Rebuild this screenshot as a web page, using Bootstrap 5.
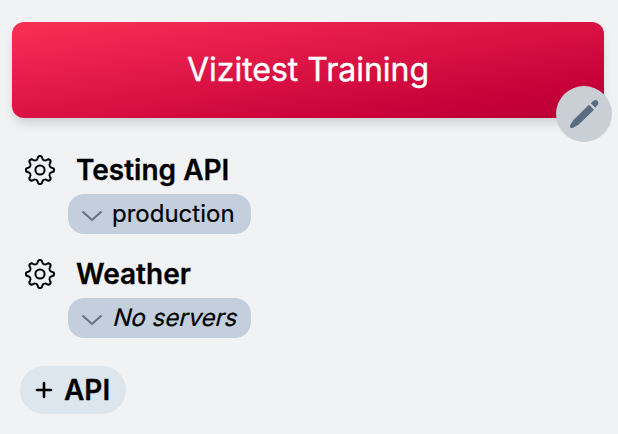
<!DOCTYPE html>
<html lang="en">
<head>
<meta charset="utf-8">
<title>Vizitest Training</title>
<link href="https://cdn.jsdelivr.net/npm/bootstrap@5.3.0/dist/css/bootstrap.min.css" rel="stylesheet">
<style>
body{background:#f0f2f4;font-family:Inter,"Liberation Sans",sans-serif;color:#000;height:434px;overflow:hidden}
.project{margin:22px 14px 0 12px;height:96px;border-radius:12px;background:linear-gradient(to bottom right,#fa3056,#c70039 80%,#b80035);box-shadow:0 8px 12px -2px rgba(0,0,0,.1),0 4px 8px -2px rgba(0,0,0,.06);color:#fff;font-size:32px}
.title{-webkit-text-stroke:.4px #fff}
.edit{right:-8px;bottom:-24px;width:56px;height:56px;background:#cacfd6;color:#586b80}
.apis{padding:32px 0 0 20px}
.api{height:104px}
.api-name{font-size:28px;font-weight:600;line-height:40px;-webkit-text-stroke:.3px #000}
.gear{width:40px;height:40px;margin-right:16px}
.server{width:183px;height:40px;margin-left:48px;padding-left:13px;border-radius:16px;background:#c3cfdd;font-size:24px;line-height:40px}
.server span,.server em{-webkit-text-stroke:.2px #000}
.server em{font-style:normal;transform:skewX(-14deg);margin-left:2px}
.server svg{margin-right:9px}
.add{width:106px;height:48px;margin-top:8px;background:#dee6ed;color:#000;font-size:28px;font-weight:600;-webkit-text-stroke:.3px #000}
</style>
<script src="https://cdn.jsdelivr.net/npm/bootstrap@5.3.0/dist/js/bootstrap.bundle.min.js"></script>
</head>
<body class="d-flex flex-column">
<header class="project position-relative d-flex align-items-center justify-content-center flex-shrink-0">
<span class="title">Vizitest Training</span>
<button class="edit btn border-0 p-0 rounded-circle position-absolute" aria-label="Edit"><svg class="d-block" width="56" height="56" viewBox="0 0 56 56" fill="currentColor"><path d="M33 18.8 38 23.8 22.5 38.8 17.2 41.7Q13.4 43 14.2 39.2L17.2 34.2Z"/><path d="M34.8 17.2 37 15.2Q39.6 12.9 41.5 14.9Q43.4 17 40.9 19.6L39.3 21.7Z"/></svg></button>
</header>
<main class="apis">
<svg class="d-none"><defs><path id="tooth" d="M-4.06-9.79C-3-10.1-2.5-10.8-2.3-11.8C-2-13.5-1.3-14.1 0-14.1S2-13.5 2.3-11.8C2.5-10.8 3-10.1 4.06-9.79"/>
<g id="gear" fill="none" stroke="currentColor" stroke-width="2"><use href="#tooth"/><use href="#tooth" transform="rotate(45)"/><use href="#tooth" transform="rotate(90)"/><use href="#tooth" transform="rotate(135)"/><use href="#tooth" transform="rotate(180)"/><use href="#tooth" transform="rotate(225)"/><use href="#tooth" transform="rotate(270)"/><use href="#tooth" transform="rotate(315)"/><circle r="4.6"/></g></defs></svg>
<section class="api">
<div class="d-flex"><svg class="gear" viewBox="-20 -20 40 40"><use href="#gear"/></svg><span class="api-name">Testing API</span></div>
<div class="server d-flex mt-1"><svg width="22" height="40" fill="none" stroke="#69717c" stroke-width="2"><path d="m1.5 17.5 9.5 8.5 9.5-8.5"/></svg><span>production</span></div>
</section>
<section class="api">
<div class="d-flex"><svg class="gear" viewBox="-20 -20 40 40"><use href="#gear"/></svg><span class="api-name">Weather</span></div>
<div class="server d-flex mt-1"><svg width="22" height="40" fill="none" stroke="#69717c" stroke-width="2"><path d="m1.5 17.5 9.5 8.5 9.5-8.5"/></svg><em>No servers</em></div>
</section>
<button class="add btn border-0 rounded-pill d-flex align-items-center p-0"><svg width="44" height="48" fill="none" stroke="#000" stroke-width="2.6" stroke-linecap="round"><path d="M17 24h14M24 17v14"/></svg><span>API</span></button>
</main>
</body>
</html>
